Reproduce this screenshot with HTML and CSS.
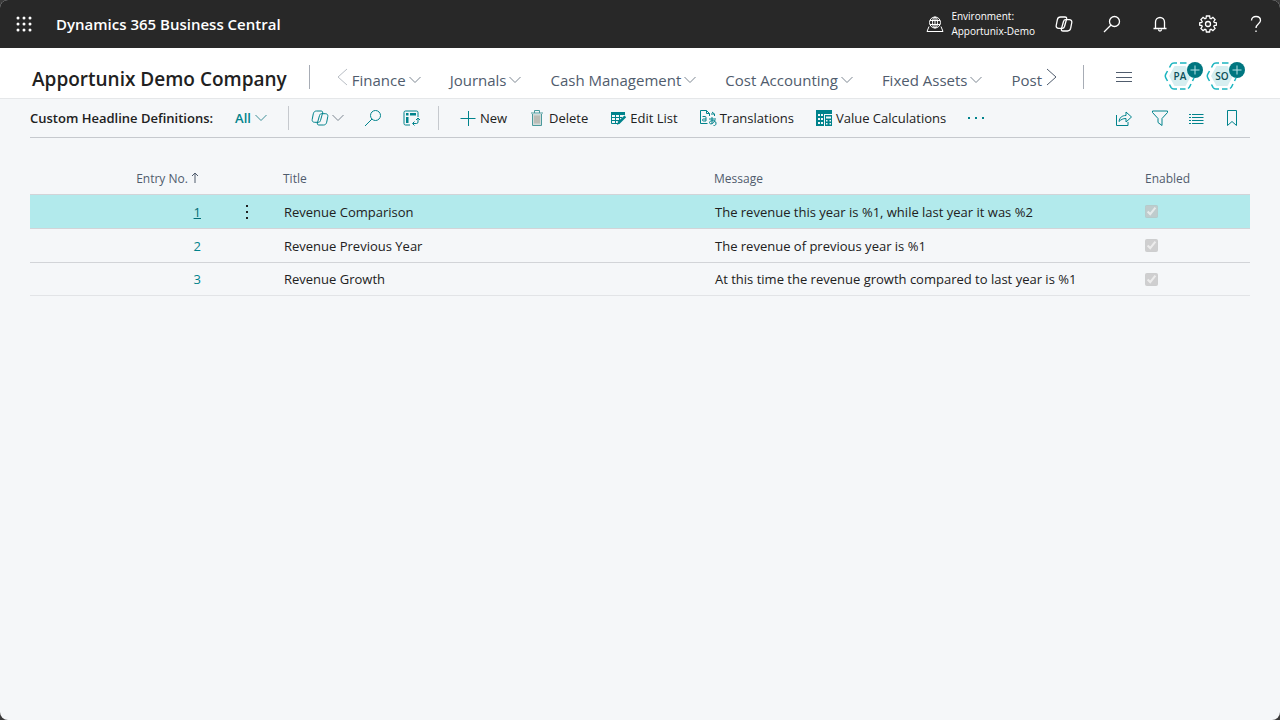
FILE: index.html
```html
<!DOCTYPE html>
<html lang="en">
<head>
  <meta charset="UTF-8">
  <meta name="viewport" content="width=device-width, initial-scale=1">
  <title>Custom Headline Definitions</title>
  <link rel="stylesheet" href="styles.css">
</head>
<body>

  <!-- shared icons -->
  <svg class="sprite" aria-hidden="true">
    <symbol id="i-down" viewBox="0 0 12 8"><path d="M.5 1 6 6.500 11.500 1"/></symbol>
    <symbol id="i-search" viewBox="0 0 18 18"><circle cx="11.500" cy="6.500" r="5"/><path d="M8 10 1 17"/></symbol>
    <symbol id="i-copilot" viewBox="0 0 18 18">
      <path d="M5.500 2H10c1.300 0 1.900.7 1.600 2L9.500 11.500c-.4 1.300-1 1.800-2.200 1.800H3.700C1.900 13.300.9 12.200 1.200 10.500L2.300 4.800C2.700 3 3.800 2 5.500 2z"/>
      <path d="M10.700 4.700h3.600c1.800 0 2.800 1.100 2.500 2.800l-1.100 5.700c-.4 1.800-1.500 2.800-3.200 2.800H8c-1.300 0-1.900-.7-1.600-2l2.100-7.500c.4-1.300 1-1.800 2.200-1.800z"/>
    </symbol>
    <symbol id="i-hex" viewBox="0 0 32 30">
      <path class="hex-fill" d="M10.500 5h11L27 15l-5.500 10h-11L5 15z"/>
      <path class="hex-line" d="M5.500 6.500 7 3.700Q8 2 10 2h3M16 2h6.500M3.500 10 1.800 13.200q-1 1.800 0 3.600L3.500 20M5.500 23.500 7 26.300Q8 28 10 28h3M16 28h5.500M24 27.500q1.500-1 2-2.500l1-2M28.500 20l1.500-3"/>
    </symbol>
  </svg>

  <div class="app">
    <header class="topbar">
      <button class="icon-btn" aria-label="App launcher">
        <svg class="waffle" viewBox="0 0 16 16">
          <circle cx="2" cy="2" r="1.500"/><circle cx="8" cy="2" r="1.500"/><circle cx="14" cy="2" r="1.500"/>
          <circle cx="2" cy="8" r="1.500"/><circle cx="8" cy="8" r="1.500"/><circle cx="14" cy="8" r="1.500"/>
          <circle cx="2" cy="14" r="1.500"/><circle cx="8" cy="14" r="1.500"/><circle cx="14" cy="14" r="1.500"/>
        </svg>
      </button>
      <a class="product" href="#">Dynamics 365 Business Central</a>
      <button class="environment">
        <svg class="icon" viewBox="0 0 18 18">
          <circle cx="9" cy="7.500" r="5.500"/><ellipse cx="9" cy="7.500" rx="2.500" ry="5.500"/>
          <path d="M4 5.500h10M4 9.500h10M9 2v11M3 11.500 1 16.500h16l-2-5"/>
        </svg>
        <span>Environment:<br>Apportunix-Demo</span>
      </button>
      <button class="icon-btn" aria-label="Copilot"><svg class="icon"><use href="#i-copilot"/></svg></button>
      <button class="icon-btn" aria-label="Search"><svg class="icon"><use href="#i-search"/></svg></button>
      <button class="icon-btn" aria-label="Notifications">
        <svg class="icon" viewBox="0 0 18 18"><path d="M4.500 13.500V7a4.500 4.500 0 0 1 9 0v6.500M2.500 13.500h13M7.500 14.500a1.500 1.500 0 0 0 3 0"/></svg>
      </button>
      <button class="icon-btn" aria-label="Settings">
        <svg class="icon" viewBox="0 0 18 18">
          <path d="M7.400 1h3.200l.4 2.300 1 .4 1.900-1.300 2.200 2.200-1.300 1.900.4 1 2.300.4v2.200l-2.300.4-.4 1 1.300 1.900-2.200 2.200-1.900-1.300-1 .4-.4 2.300H7.400L7 14.700l-1-.4-1.900 1.300-2.200-2.200 1.300-1.900-.4-1L.7 10.100V7.900L2.800 7.500l.4-1-1.300-1.900 2.200-2.200L6 3.700l1-.4z"/><circle cx="9" cy="9" r="2.500"/>
        </svg>
      </button>
      <button class="icon-btn" aria-label="Help">
        <svg class="icon" viewBox="0 0 18 18"><path d="M4.500 5.500C4.500 3 6.500 1.500 9 1.500S13.500 3 13.500 5.500C13.500 8.500 9 9 9 13M9 15.500v1.500"/></svg>
      </button>
    </header>

    <div class="rolebar">
      <a class="company" href="#">Apportunix Demo Company</a>
      <button class="scroll-btn disabled" aria-label="Scroll left"><svg viewBox="0 0 11 18"><path d="M10 1 1 9l9 8"/></svg></button>
      <nav class="menu">
        <button>Finance<svg class="down"><use href="#i-down"/></svg></button>
        <button>Journals<svg class="down"><use href="#i-down"/></svg></button>
        <button>Cash Management<svg class="down"><use href="#i-down"/></svg></button>
        <button>Cost Accounting<svg class="down"><use href="#i-down"/></svg></button>
        <button>Fixed Assets<svg class="down"><use href="#i-down"/></svg></button>
        <button>Post</button>
      </nav>
      <button class="scroll-btn" aria-label="Scroll right"><svg viewBox="0 0 11 18"><path d="M1 1l9 8-9 8"/></svg></button>
      <button class="more-menu" aria-label="Show menu"><svg viewBox="0 0 16 10"><path d="M0 .5h16M0 5.500h16M0 9.500h16"/></svg></button>
      <div class="badges">
        <button class="badge"><svg class="hex"><use href="#i-hex"/></svg><span>PA</span><svg class="plus" viewBox="0 0 16 16"><circle cx="8" cy="8" r="8"/><path d="M3.500 8h9M8 3.500v9"/></svg></button>
        <button class="badge"><svg class="hex"><use href="#i-hex"/></svg><span>SO</span><svg class="plus" viewBox="0 0 16 16"><circle cx="8" cy="8" r="8"/><path d="M3.500 8h9M8 3.500v9"/></svg></button>
      </div>
    </div>

    <main>
      <div class="actionbar">
        <h1>Custom Headline Definitions:</h1>
        <button class="view">All<svg class="down"><use href="#i-down"/></svg></button>
        <div class="group tools">
          <button aria-label="Copilot"><svg class="icon"><use href="#i-copilot"/></svg><svg class="down"><use href="#i-down"/></svg></button>
          <button aria-label="Search"><svg class="icon"><use href="#i-search"/></svg></button>
          <button aria-label="Analyze">
            <svg class="icon" viewBox="0 0 18 18"><path d="M16 8V3.500A1.500 1.500 0 0 0 14.500 2h-11A1.500 1.500 0 0 0 2 3.500v11A1.500 1.500 0 0 0 3.500 16H8M11 14.500h3.500a1.500 1.500 0 0 0 1.500-1.500v-3M12.500 12.500l-2 2 2 2M14 11l2-2 2 2"/><path class="solid" d="M4 4h2.500v2.500H4zM8 4h6v2.500H8zM4 8h2.500v6H4z"/></svg>
          </button>
        </div>
        <div class="group actions">
          <button><svg class="icon" viewBox="0 0 18 18"><path d="M1.500 9.500h15M9.500 2v15"/></svg>New</button>
          <button>
            <svg class="icon trash" viewBox="0 0 18 18"><path class="bin" d="M4.500 5h9v11.500h-9z"/><path d="M4.500 5v11.500h9V5M3 4h12M6.500 4V1.500h5V4"/><path class="ribs" d="M7 6.500v8M9 6.500v8M11 6.500v8"/></svg>Delete
          </button>
          <button>
            <svg class="icon" viewBox="0 0 18 18"><path class="solid" d="M2 3h14v3H2z"/><path d="M2.500 5v9.500H10M2.500 8.500H13M2.500 11.500H11M6.500 5v9.500M10.500 5v7"/><path class="solid" d="m15.500 6.500 1.700 1.700-6 6-3.200 1.800 1.200-3.800z"/></svg>Edit List
          </button>
          <button>
            <svg class="icon" viewBox="0 0 18 18"><path d="M8.500 14.500h-7v-13h6l3 3V7M7.500 1.500v3h3"/><path d="M3.500 7.500h2.500q1 0 1 1v3.500H4.500q-1 0-1-1t1-1H7M13 3l2.500 2H12M15.500 5v2M10 10h7M13 8v7M16 11c-1 4-5.500 5-5.500 2.500S17 11 17 14s-2 2.500-2.500 2.500"/></svg>Translations
          </button>
          <button>
            <svg class="icon" viewBox="0 0 18 18">
              <path class="solid" d="M1 1h16v16H1z"/>
              <path class="gaps" d="M3 5h2v2H3zM6 5h2v2H6zM3 9h2v2H3zM6 9h2v2H6zM3 13h2v2H3zM6 13h2v2H6z"/>
              <path class="gaps" d="M9 5h9v13H9z"/><path class="solid" d="M10 6h7v11h-7z"/>
              <path class="gaps" d="M11 7.500h5v2h-5zM11 11h1.500v1.500H11zM14.500 11H16v1.500h-1.500zM11 14h1.500v1.500H11zM14.500 14H16v1.500h-1.500z"/>
            </svg>Value Calculations
          </button>
          <button aria-label="More options"><svg class="icon" viewBox="0 0 18 18"><path class="solid" d="M1 8h2v2H1zM8 8h2v2H8zM15 8h2v2h-2z"/></svg></button>
        </div>
        <div class="page-tools">
          <button aria-label="Share"><svg class="icon" viewBox="0 0 18 18"><path d="M1.500 6v10.500H13V13M4 12.500C4.500 8.500 7 6.500 11 6.500V3l5.500 5-5.500 5V9.500C8 9.500 6 10.500 4 12.500z"/></svg></button>
          <button aria-label="Filter"><svg class="icon" viewBox="0 0 18 18"><path d="M1.500 2h15v1.500L11 9.500v7L7 13.500v-4L1.500 3.500z"/></svg></button>
          <button aria-label="List view"><svg class="icon" viewBox="0 0 18 18"><path d="M2 5.500h2M5 5.500h11.500M2 8.500h2M5 8.500h11.500M2 11.500h2M5 11.500h11.500M2 14.500h2M5 14.500h11.500"/></svg></button>
          <button aria-label="Bookmark"><svg class="icon" viewBox="0 0 18 18"><path d="M4.500 1.500h9v15L9 12.500l-4.500 4z"/></svg></button>
        </div>
      </div>

      <table class="list">
        <colgroup><col class="c-no"><col class="c-menu"><col><col><col class="c-on"></colgroup>
        <thead>
          <tr>
            <th class="no" scope="col">Entry No. <svg viewBox="0 0 8 11"><path d="M4 11V1M1 4l3-3 3 3"/></svg></th>
            <td></td>
            <th scope="col">Title</th>
            <th scope="col">Message</th>
            <th scope="col">Enabled</th>
          </tr>
        </thead>
        <tbody>
          <tr class="selected">
            <td class="no"><a href="#">1</a></td>
            <td class="row-menu"><button aria-label="Row options"><svg viewBox="0 0 4 16"><path d="M1 1h2v2H1zM1 7h2v2H1zM1 13h2v2H1z"/></svg></button></td>
            <td>Revenue Comparison</td>
            <td>The revenue this year is %1, while last year it was %2</td>
            <td><input type="checkbox" aria-label="Enabled" checked disabled></td>
          </tr>
          <tr>
            <td class="no"><a href="#">2</a></td>
            <td></td>
            <td>Revenue Previous Year</td>
            <td>The revenue of previous year is %1</td>
            <td><input type="checkbox" aria-label="Enabled" checked disabled></td>
          </tr>
          <tr>
            <td class="no"><a href="#">3</a></td>
            <td></td>
            <td>Revenue Growth</td>
            <td>At this time the revenue growth compared to last year is %1</td>
            <td><input type="checkbox" aria-label="Enabled" checked disabled></td>
          </tr>
        </tbody>
      </table>
    </main>
  </div>

</body>
</html>
```
FILE: styles.css
```css
* {
  box-sizing: border-box;
}

body {
  margin: 0;
  background: #3a3a3a;
  color: #212121;
  font-family: "Segoe UI", "Open Sans", "Noto Sans", sans-serif;
  font-size: 13px;
  line-height: 18px;
}

a {
  color: inherit;
  text-decoration: none;
}

button {
  display: flex;
  align-items: center;
  padding: 0;
  border: 0;
  background: none;
  color: inherit;
  font: inherit;
  white-space: nowrap;
  cursor: pointer;
}

svg {
  display: block;
  flex: none;
  fill: none;
  stroke: currentColor;
}

.sprite {
  position: absolute;
  width: 0;
  height: 0;
}

.icon {
  width: 18px;
  height: 18px;
}

.down {
  width: 12px;
  height: 8px;
  color: #7d8691;
}

.solid {
  fill: currentColor;
  stroke: none;
}

.app {
  min-height: 100vh;
  border-radius: 8px;
  overflow: hidden;
  background: #f5f7f9;
}

/* top bar */
.topbar {
  display: flex;
  align-items: center;
  height: 48px;
  background: #282828;
  color: #fff;
}

.icon-btn {
  justify-content: center;
  width: 48px;
  height: 48px;
}

.icon-btn .icon {
  stroke-width: 1.3;
}

.waffle {
  width: 16px;
  height: 16px;
  fill: currentColor;
  stroke: none;
}

.product {
  margin-left: 8px;
  margin-right: auto;
  font-size: 15px;
  font-weight: 600;
}

.environment {
  gap: 7px;
  margin-right: 5px;
  font-size: 10px;
  line-height: 15px;
  text-align: left;
}

/* company and role menu */
.rolebar {
  display: flex;
  align-items: center;
  height: 51px;
  padding: 8px 42px 0 32px;
  border-bottom: 1px solid #e5e7e9;
  background: #fff;
  color: #505c6d;
}

.company {
  height: 24px;
  padding-top: 2px;
  padding-right: 22px;
  border-right: 1px solid #a7acb5;
  color: #212121;
  font-size: 19px;
  font-weight: 600;
  line-height: 24px;
  white-space: nowrap;
}

.scroll-btn svg {
  width: 11px;
  height: 18px;
}

.scroll-btn.disabled {
  margin-left: 27px;
  margin-right: 4px;
  color: #b9bec5;
}

.menu {
  display: flex;
  flex: 1;
  justify-content: space-between;
  margin-right: 4px;
  padding-top: 6px;
  font-size: 15px;
  line-height: 20px;
}

.menu button {
  gap: 3px;
}

.more-menu {
  height: 24px;
  margin-left: 26px;
  padding: 0 32px;
  border-left: 1px solid #a7acb5;
}

.more-menu svg {
  width: 16px;
  height: 10px;
}

.badges {
  display: flex;
  gap: 10px;
  padding-bottom: 2px;
}

.badge {
  position: relative;
  justify-content: center;
  width: 32px;
  height: 30px;
  color: #0b4f57;
  font-size: 10px;
  font-weight: 600;
}

.badge span {
  position: relative;
}

.hex {
  position: absolute;
  inset: 0;
  width: 32px;
  height: 30px;
}

.hex-fill {
  fill: #d6eef0;
  stroke: none;
}

.hex-line {
  stroke: #1bb5c0;
  stroke-width: 1.5;
}

.plus {
  position: absolute;
  top: 1px;
  right: -7px;
  width: 16px;
  height: 16px;
  stroke: #b9e4e8;
}

.plus circle {
  fill: #007680;
  stroke: none;
}

/* action bar */
main {
  padding: 0 30px;
}

.actionbar {
  display: flex;
  align-items: center;
  height: 39px;
  border-bottom: 1px solid #c6c9ce;
}

.actionbar h1 {
  margin: 0 22px 0 0;
  font-size: 13px;
  font-weight: 600;
  line-height: 20px;
  white-space: nowrap;
}

.view {
  gap: 4px;
  color: #00838c;
  font-weight: 600;
  line-height: 20px;
}

.view .down {
  color: #3f8f98;
}

.group {
  display: flex;
  align-items: center;
  height: 24px;
  border-left: 1px solid #c6c9ce;
  line-height: 20px;
}

.group .icon,
.page-tools {
  color: #00838c;
}

.tools {
  gap: 20px;
  margin-left: 21px;
  padding: 0 18px 0 22px;
}

.tools button {
  gap: 3px;
}

.actions {
  gap: 21px;
  padding-left: 20px;
}

.actions button {
  gap: 3px;
}

.group .trash {
  color: #4a9a9c;
}

.bin {
  fill: #d3dad9;
  stroke: none;
}

.ribs {
  stroke: #a39f93;
}

.gaps {
  fill: #f5f7f9;
  stroke: none;
}

.page-tools {
  display: flex;
  gap: 18px;
  margin-left: auto;
  padding-right: 9px;
}

/* list */
.list {
  width: 100%;
  margin-top: 25px;
  border-collapse: separate;
  border-spacing: 0;
  table-layout: fixed;
}

.c-no {
  width: 187px;
}

.c-menu {
  width: 60px;
}

.c-on {
  width: 111px;
}

.list th {
  height: 31px;
  padding: 0 6px;
  color: #505c6d;
  font-size: 12px;
  font-weight: 400;
  text-align: left;
}

.list th svg {
  display: inline-block;
  width: 8px;
  height: 11px;
}

.list tbody td {
  height: 34px;
  padding: 0 7px;
  border-top: 1px solid #d2d4d8;
}

.list tbody tr:last-child td {
  border-bottom: 1px solid #e2e4e7;
}

.list tbody .selected td {
  background: #b2eaec;
}

.list .no {
  padding-right: 16px;
  text-align: right;
}

.list th.no {
  padding-right: 18px;
}

.list .no a {
  color: #00838c;
}

.list .selected a {
  color: #006d75;
  text-decoration: underline;
}

.row-menu button {
  margin: 0 auto;
}

.row-menu svg {
  width: 4px;
  height: 16px;
  fill: currentColor;
  stroke: none;
}

.list input {
  display: block;
  margin: 0 0 0 -1px;
}
```
